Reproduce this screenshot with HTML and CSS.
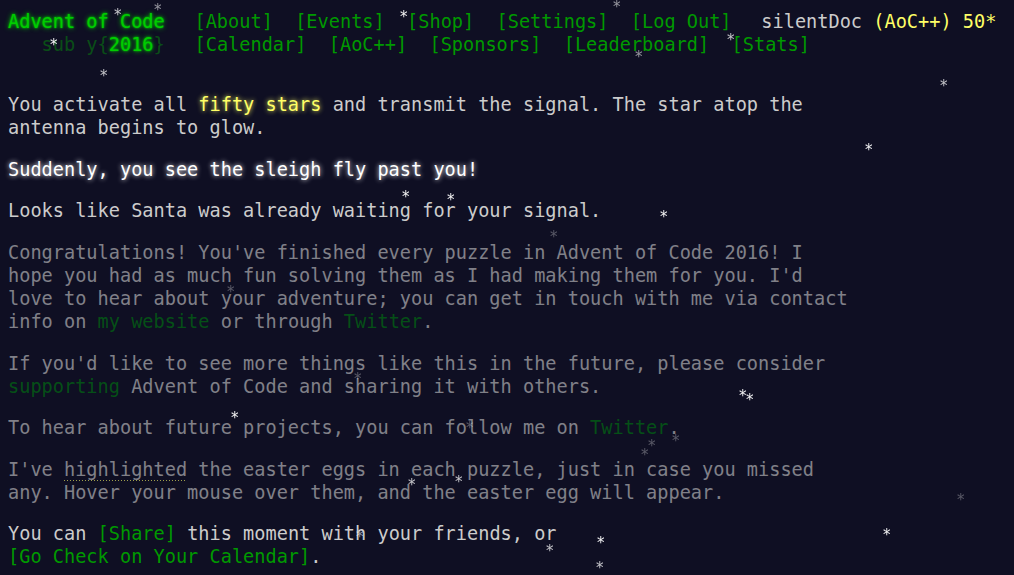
FILE: index.html
```html
<!DOCTYPE html>
<html lang="en">
<head>
<meta charset="utf-8">
<title>Advent of Code 2016</title>
<link rel="stylesheet" href="styles.css">
</head>
<body>
<header>
  <div class="row">
    <h1 class="title-global"><a href="#">Advent of Code</a></h1>
    <nav><ul><li><a href="#">[About]</a></li><li><a href="#">[Events]</a></li><li><a href="#">[Shop]</a></li><li><a href="#">[Settings]</a></li><li><a href="#">[Log Out]</a></li></ul></nav>
    <div class="user">silentDoc <span class="supporter">(AoC++)</span> <span class="star-count">50*</span></div>
  </div>
  <div class="row">
    <h1 class="title-event">&nbsp;&nbsp;&nbsp;<span class="wrap">sub y{</span><a href="#">2016</a><span class="wrap">}</span></h1>
    <nav><ul><li><a href="#">[Calendar]</a></li><li><a href="#">[AoC++]</a></li><li><a href="#">[Sponsors]</a></li><li><a href="#">[Leaderboard]</a></li><li><a href="#">[Stats]</a></li></ul></nav>
  </div>
</header>
<main>
  <article>
    <p>You activate all <span class="yellow">fifty stars</span> and transmit the signal. The star atop the antenna begins to glow.</p>
    <p class="bright">Suddenly, you see the sleigh fly past you!</p>
    <p>Looks like Santa was already waiting for your signal.</p>
    <p class="faded">Congratulations! You've finished every puzzle in Advent of Code 2016! I hope you had as much fun solving them as I had making them for you. I'd love to hear about your adventure; you can get in touch with me via contact info on <a href="#">my website</a> or through <a href="#">Twitter</a>.</p>
    <p class="faded">If you'd like to see more things like this in the future, please consider <a href="#">supporting</a> Advent of Code and sharing it with others.</p>
    <p class="faded">To hear about future projects, you can follow me on <a href="#">Twitter</a>.</p>
    <p class="faded">I've <span class="egg">highlighted</span> the easter eggs in each puzzle, just in case you missed any. Hover your mouse over them, and the easter egg will appear.</p>
    <p>You can <a href="#">[Share]</a> this moment with your friends, or <span class="nowrap"><a href="#">[Go Check on Your Calendar]</a>.</span></p>
  </article>
</main>
<div class="sky">
  <span class="star s2" style="left:114px;top:8px">*</span>
  <span class="star s3" style="left:154px;top:3px">*</span>
  <span class="star s1" style="left:50px;top:38px">*</span>
  <span class="star s1" style="left:400px;top:10px">*</span>
  <span class="star s3" style="left:613px;top:0px">*</span>
  <span class="star s3" style="left:635px;top:50px">*</span>
  <span class="star s2" style="left:100px;top:69px">*</span>
  <span class="star s2" style="left:727px;top:33px">*</span>
  <span class="star s2" style="left:940px;top:79px">*</span>
  <span class="star s1" style="left:865px;top:143px">*</span>
  <span class="star s1" style="left:402px;top:190px">*</span>
  <span class="star s1" style="left:447px;top:193px">*</span>
  <span class="star s1" style="left:660px;top:210px">*</span>
  <span class="star s4" style="left:550px;top:230px">*</span>
  <span class="star s4" style="left:227px;top:285px">*</span>
  <span class="star s4" style="left:354px;top:372px">*</span>
  <span class="star s1" style="left:739px;top:389px">*</span>
  <span class="star s1" style="left:746px;top:393px">*</span>
  <span class="star s1" style="left:231px;top:411px">*</span>
  <span class="star s4" style="left:466px;top:421px">*</span>
  <span class="star s4" style="left:672px;top:434px">*</span>
  <span class="star s4" style="left:648px;top:439px">*</span>
  <span class="star s4" style="left:641px;top:448px">*</span>
  <span class="star s2" style="left:455px;top:475px">*</span>
  <span class="star s2" style="left:408px;top:478px">*</span>
  <span class="star s4" style="left:957px;top:493px">*</span>
  <span class="star s1" style="left:883px;top:528px">*</span>
  <span class="star s1" style="left:597px;top:536px">*</span>
  <span class="star s3" style="left:356px;top:530px">*</span>
  <span class="star s2" style="left:546px;top:544px">*</span>
  <span class="star s2" style="left:596px;top:561px">*</span>
</div>
</body>
</html>
```
FILE: styles.css
```css
html, body {
  background: #0f0f23;
}
body {
  margin: 0;
  padding: 10px 8px 8px;
  color: #cccccc;
  font-family: "DejaVu Sans Mono", "Liberation Mono", monospace;
  font-size: 18.6px;
  line-height: 23px;
}
a {
  color: #009900;
  text-decoration: none;
}
header {
  white-space: nowrap;
  margin-bottom: 2em;
}
.row {
  display: flex;
  align-items: baseline;
}
header h1 {
  display: inline-block;
  margin: 0;
  padding-right: 1em;
  font-size: 1em;
  font-weight: normal;
}
header h1 a {
  color: #00cc00;
  text-shadow: 0 0 2px #00cc00, 0 0 5px #00cc00;
}
.title-event .wrap {
  color: #00cc00;
  opacity: 0.33;
  white-space: pre;
}
header nav ul {
  list-style: none;
  margin: 0;
  padding: 0;
  display: inline-block;
}
header nav li {
  display: inline-block;
  padding: 0 0.6em;
}
.user {
  padding-left: 1em;
  color: #cccccc;
}
.supporter, .star-count {
  color: #ffff66;
}
main {
  display: block;
}
article {
  width: 75ch;
}
p {
  margin: 1em 0;
}
.yellow {
  color: #ffff66;
  text-shadow: 0 0 5px #ffff66;
}
.bright {
  color: #ffffff;
  text-shadow: 0 0 5px #ffffff;
}
.faded {
  opacity: 0.6;
}
.faded a {
  color: #007a10;
}
.egg {
  background-image: linear-gradient(to right, #ffff66 50%, transparent 50%);
  background-size: 3px 1px;
  background-repeat: repeat-x;
  background-position: 0 21px;
  padding-bottom: 1px;
}
.nowrap {
  white-space: nowrap;
}
.sky {
  position: fixed;
  inset: 0;
  pointer-events: none;
  overflow: hidden;
}
.star {
  position: absolute;
  font-family: "DejaVu Sans", sans-serif;
  font-size: 15px;
  line-height: 15px;
  color: #ffffff;
}
.s1 { opacity: 0.95; }
.s2 { opacity: 0.75; }
.s3 { opacity: 0.55; }
.s4 { opacity: 0.3; }
```
